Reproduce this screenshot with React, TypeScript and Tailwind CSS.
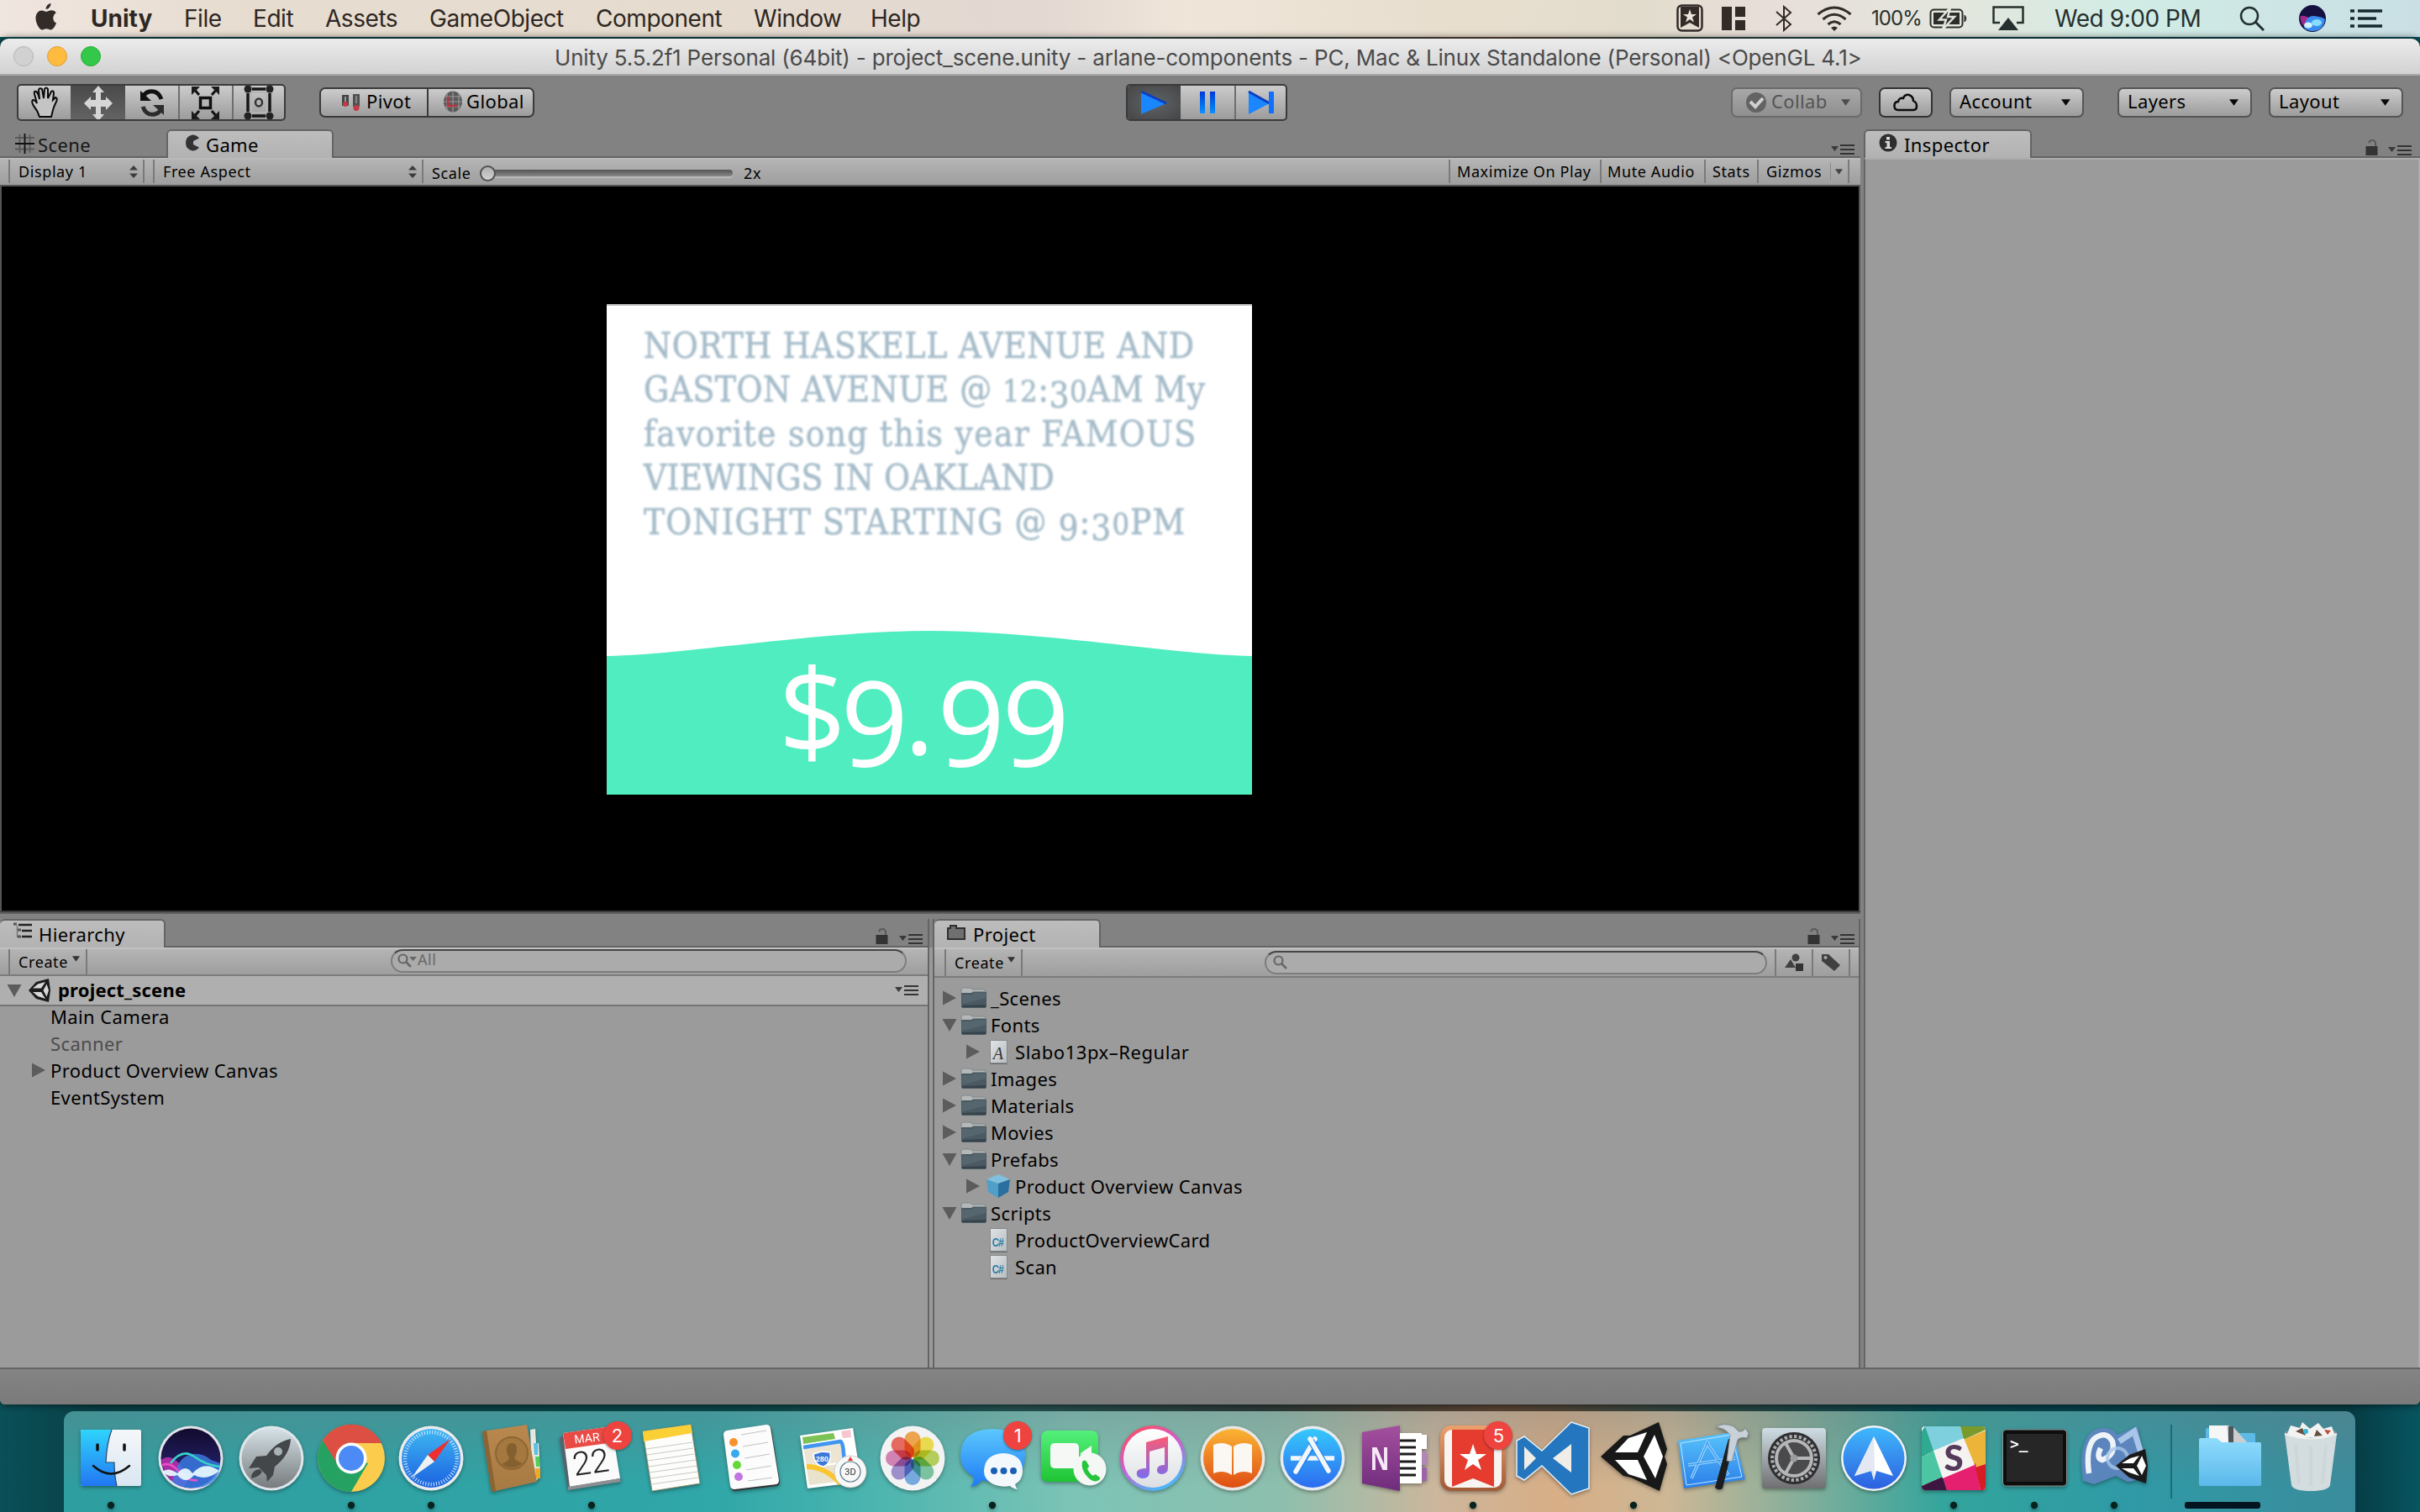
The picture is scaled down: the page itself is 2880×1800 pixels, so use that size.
import type { ReactNode } from "react";

/* ---------- Shared pieces ---------- */

const raised = "bg-gradient-to-b from-[#cccccc] to-[#9c9c9c]";

function Caret({ small = false, color = "#0a0a0a" }: { small?: boolean; color?: string }) {
  return (
    <svg width={small ? 9 : 11} height={small ? 7 : 8} viewBox="0 0 10 7" className="shrink-0">
      <path d="M0 0H10L5 7Z" fill={color} />
    </svg>
  );
}

function PaneMenu() {
  return (
    <svg width="28" height="12" viewBox="0 0 28 12" className="shrink-0">
      <path d="M0 2H9L4.500 8Z" fill="#3a3a3a" />
      <path d="M11 1H28M11 6H28M11 11H28" stroke="#333" strokeWidth="2" />
    </svg>
  );
}

function Lock() {
  return (
    <svg width="16" height="19" viewBox="0 0 16 19" className="shrink-0">
      <path d="M4.500 4.500V3.500Q4.500 1 8 1T12 4V9" fill="none" stroke="#5a5a5a" strokeWidth="2" />
      <rect x="0.500" y="8" width="14" height="11" fill="#333" />
    </svg>
  );
}

function UpDown() {
  return (
    <svg width="10" height="15" viewBox="0 0 10 15" className="shrink-0">
      <path d="M0 5.500L5 0L10 5.500ZM0 9.500H10L5 15Z" fill="#3c3c3c" />
    </svg>
  );
}

function Tab({ className, children }: { className: string; children: ReactNode }) {
  return (
    <div
      className={`flex h-full items-center rounded-t-[6px] border-2 border-b-0 border-[#646464] bg-gradient-to-b from-[#bdbdbd] to-[#b2b2b2] ${className}`}
    >
      {children}
    </div>
  );
}

/* ---------- Mac menu bar ---------- */

const menus = [
  ["File", "w-[82px]"],
  ["Edit", "w-[86px]"],
  ["Assets", "w-[124px]"],
  ["GameObject", "w-[198px]"],
  ["Component", "w-[188px]"],
  ["Window", "w-[139px]"],
  ["Help", "w-[80px]"],
];

function MenuBar() {
  return (
    <div className="flex h-11 shrink-0 items-center bg-[linear-gradient(90deg,#f0e6e0_0,#e6dccf_10%,#e5dbcf_30%,#e3d8d2_43%,#efe5d9_49%,#e8dece_60%,#e2dccd_68%,#e8ded9_73%,#e3e6dd_81%,#d1ece5_88%,#c9dfe5_100%)] pl-[42px] font-['Inter',sans-serif] text-[28px] leading-none tracking-[-0.45px] text-[#2e2722]">
      <svg width="26" height="32" viewBox="0 0 26 32" className="-mt-1">
        <path d="M18.500 0C18.700 3.600 15.800 7 12.600 7C12.300 3.600 15.300 0.400 18.500 0Z" fill="#332b28" />
        <path d="M25 23.500C23.600 27.200 21 31.500 18.200 31.500C16.200 31.500 15.700 30.300 13.300 30.300C10.900 30.300 10.200 31.500 8.400 31.500C4.800 31.500 0.500 23.700 0.500 17.500C0.500 11.800 3.900 8.400 7.600 8.400C10 8.400 11.700 9.900 13.300 9.900C14.800 9.900 16.900 8.200 19.700 8.300C21 8.300 23.400 8.900 24.800 11.200C19.800 14.300 20.500 21.500 25 23.500Z" fill="#332b28" />
      </svg>
      <span className="ml-10 w-[111px] font-bold tracking-normal">Unity</span>
      {menus.map(([name, w]) => (
        <span key={name} className={w}>
          {name}
        </span>
      ))}
      <div className="ml-auto flex items-center text-[#26302e]">
        <svg width="32" height="34" viewBox="0 0 32 34">
          <rect x="1.500" y="1.500" width="29" height="30" rx="5" fill="none" stroke="#332b28" strokeWidth="2.500" />
          <path d="M5 3H27V28L16 22L5 28Z" fill="#332b28" />
          <path d="M16 6L18 12H24L19 15.500L21 21.500L16 18L11 21.500L13 15.500L8 12H14Z" fill="#ece3da" />
        </svg>
        <svg width="28" height="28" viewBox="0 0 28 28" className="ml-[22px]">
          <path d="M0 0H12V28H0ZM16 0H28V12H16ZM16 16H28V28H16Z" fill="#332b28" />
        </svg>
        <svg width="20" height="32" viewBox="0 0 20 32" className="ml-[36px]">
          <path d="M1 8L18 23L10 30V2L18 9L1 24" fill="none" stroke="#332b28" strokeWidth="2" />
        </svg>
        <svg width="42" height="30" viewBox="0 0 42 30" className="ml-[29px]">
          <g fill="none" stroke="#332b28" strokeWidth="3">
            <path d="M1.500 10Q21 -6 40.500 10" />
            <path d="M7.500 16Q21 4.500 34.500 16" />
            <path d="M13.500 22Q21 15.500 28.500 22" />
          </g>
          <path d="M17 26Q21 23 25 26L21 30Z" fill="#332b28" />
        </svg>
        <span className="ml-[23px] w-[69px] text-[24px] tracking-[-0.9px]">100%</span>
        <svg width="46" height="26" viewBox="0 0 46 26">
          <rect x="1.500" y="2.500" width="38" height="21" rx="4" fill="none" stroke="#2c2e2b" strokeWidth="2" />
          <rect x="5" y="6" width="31" height="14" fill="#2c2e2b" />
          <path d="M42 9Q45.500 13 42 17Z" fill="#2c2e2b" stroke="#2c2e2b" />
          <path d="M25 0L12 14.500H20L16 26L30 11H22Z" fill="#2c2e2b" stroke="#e1e6dd" strokeWidth="2.500" />
        </svg>
        <svg width="38" height="30" viewBox="0 0 38 30" className="ml-[29px]">
          <path d="M9 20H1.500V1.500H36.500V20H29" fill="none" stroke="#26302e" strokeWidth="2.500" />
          <path d="M19 14L31 29H7Z" fill="#26302e" />
        </svg>
        <span className="ml-[36px] w-[220px]">Wed 9:00 PM</span>
        <svg width="30" height="30" viewBox="0 0 30 30">
          <circle cx="12" cy="12" r="10" fill="none" stroke="#22302f" strokeWidth="2.500" />
          <path d="M19 19L29 29" stroke="#22302f" strokeWidth="3" />
        </svg>
        <SiriOrb className="ml-[41px] size-8" />
        <svg width="38" height="22" viewBox="0 0 38 22" className="mr-[45px] ml-[29px]">
          <path d="M0 2H5M0 11H5M0 20H5M9 2H38M9 11H31M9 20H38" stroke="#16292d" strokeWidth="3.500" />
        </svg>
      </div>
    </div>
  );
}

function SiriOrb({ className }: { className: string }) {
  return (
    <svg viewBox="0 0 32 32" className={className}>
      <circle cx="16" cy="16" r="16" fill="#151040" />
      <path d="M1 14Q8 10 16 20L12 29Q3 27 1 14Z" fill="#a02a8a" />
      <path d="M6 27Q8 12 18 13T31 17Q29 31 16 31Q10 31 6 27Z" fill="#3b8df0" />
      <ellipse cx="11" cy="24" rx="5" ry="3.500" fill="#cff3ff" />
      <ellipse cx="21" cy="21" rx="6" ry="4" fill="#8fe6ff" opacity="0.900" />
    </svg>
  );
}

/* ---------- Unity window chrome ---------- */

function TitleBar() {
  return (
    <div className="flex h-11 shrink-0 items-center rounded-t-[10px] border-b-2 border-[#a9a9a9] bg-gradient-to-b from-[#ececec] to-[#d2d2d2] pl-4">
      <div className="flex w-[644px] gap-4">
        <i className="size-6 rounded-full border border-[#b5b5b5] bg-[#d1d1d1]" />
        <i className="size-6 rounded-full border border-[#de9f34] bg-[#fdbc40]" />
        <i className="size-6 rounded-full border border-[#27aa35] bg-[#34c84a]" />
      </div>
      <h1 className="pt-1 font-['Inter',sans-serif] text-[26px] leading-none tracking-[-0.18px] whitespace-pre text-[#4a4a4a]">
        Unity 5.5.2f1 Personal (64bit) - project_scene.unity - arlane-components - PC, Mac &amp; Linux Standalone (Personal)
        &lt;OpenGL 4.1&gt;
      </h1>
    </div>
  );
}

function HandIcon() {
  return (
    <svg width="36" height="44" viewBox="0 0 36 44">
      <path
        d="M12 39Q10 32 5 26Q2 21 4 19Q7 19 9 23L6 12Q5 8 8 9Q10 10 11 14L12 18L11 7Q12 4 15 6L17 17L18 6Q20 3 22 6L22 17L26 9Q29 7 29 11L28 19L31 16Q34 17 32 21Q29 27 28 31L26 39Z"
        fill="#c4c4c4"
        stroke="#0a0a0a"
        strokeWidth="2"
      />
    </svg>
  );
}

function ToolButtons() {
  return (
    <div className={`flex h-11 w-[320px] overflow-hidden rounded-[5px] border-2 border-[#3a3a3a] ${raised}`}>
      <div className="flex w-[62px] items-center justify-center">
        <HandIcon />
      </div>
      <div className="flex w-[65px] items-center justify-center bg-gradient-to-b from-[#4a4a4a] to-[#636363]">
        <svg width="36" height="44" viewBox="0 0 36 44">
          <path d="M18 2L25 10H21V19H27V15L35 23L27 31V27H21V36H25L18 44L11 36H15V27H9V31L1 23L9 15V19H15V10H11Z" fill="#d6d6d6" />
        </svg>
      </div>
      <div className="flex w-[65px] items-center justify-center border-r-2 border-[#6e6e6e]">
        <svg width="32" height="38" viewBox="0 0 32 38">
          <path d="M27 15Q23 4 13 6Q8 7 6 11" fill="none" stroke="#111" strokeWidth="5" />
          <path d="M2 5V17H15Z" fill="#111" />
          <path d="M5 24Q9 35 19 33Q24 32 26 28" fill="none" stroke="#2c2c2c" strokeWidth="5" />
          <path d="M30 34V22H17Z" fill="#2c2c2c" />
        </svg>
      </div>
      <div className="flex w-16 items-center justify-center border-r-2 border-[#6e6e6e]">
        <svg width="36" height="40" viewBox="0 0 36 40">
          <rect x="11.500" y="14.500" width="12" height="12" fill="#b5b5b5" stroke="#111" strokeWidth="3.500" />
          <path d="M3 3L10 11M32 3L25 11M3 38L10 30M32 38L25 30" stroke="#111" strokeWidth="3" />
          <path d="M1 1H11L1 11ZM34 1H24L34 11ZM1 40H11L1 30ZM34 40H24L34 30Z" fill="#1a1a1a" />
        </svg>
      </div>
      <div className="flex flex-1 items-center justify-center">
        <svg width="36" height="42" viewBox="0 0 36 42">
          <path d="M5 5H31V37H5Z" fill="none" stroke="#161616" strokeWidth="3.500" />
          <path d="M9 1V41M27 1V41M1 9H35M1 33H35" stroke="#b4b4b4" strokeWidth="2" />
          <circle cx="5" cy="5" r="4.500" fill="#222" />
          <circle cx="31" cy="5" r="4.500" fill="#222" />
          <circle cx="5" cy="37" r="4.500" fill="#222" />
          <circle cx="31" cy="37" r="4.500" fill="#222" />
          <ellipse cx="18" cy="21" rx="4" ry="4.500" fill="none" stroke="#333" strokeWidth="2.500" />
        </svg>
      </div>
    </div>
  );
}

function PivotButtons() {
  return (
    <div className={`ml-10 flex h-9 w-[256px] rounded-[7px] border-2 border-[#3a3a3a] pb-1 ${raised}`}>
      <div className="-mb-1 flex w-[128px] items-center border-r-2 border-[#3a3a3a] pb-1 pl-6">
        <svg width="24" height="24" viewBox="0 0 24 24" className="mt-1">
          <rect x="1" y="3" width="8" height="13" fill="#444" />
          <rect x="4" y="5" width="2" height="6" fill="#999" />
          <rect x="14" y="2" width="8" height="15" fill="#505050" />
          <rect x="17" y="4" width="2" height="9" fill="#888" />
          <circle cx="5" cy="14" r="3" fill="#c43a46" />
          <circle cx="18" cy="18.500" r="3.500" fill="#c43a46" />
        </svg>
        <span className="ml-[6px]">Pivot</span>
      </div>
      <div className="flex items-center pl-4">
        <svg width="26" height="28" viewBox="0 0 26 28" className="mt-0.5">
          <ellipse cx="13" cy="14" rx="11" ry="12.500" fill="#5a5a5a" />
          <path d="M13 2V26M6 4V24M20 4V24M3 8H23M2 14H24M3 20H23" stroke="#999" strokeWidth="1.200" />
          <path d="M7 8V19H18" fill="none" stroke="#b83540" strokeWidth="2.500" />
        </svg>
        <span className="ml-[3px]">Global</span>
      </div>
    </div>
  );
}

function PlayButtons() {
  return (
    <div className={`ml-[704px] flex h-11 w-[192px] overflow-hidden rounded-[5px] border-2 border-[#3a3a3a] ${raised}`}>
      <div className="flex w-[63px] items-center justify-center bg-[radial-gradient(#5f6468,#454545)]">
        <svg width="34" height="34" viewBox="0 0 34 34">
          <path d="M1 4L31 18L1 31Z" fill="#1a86ff" />
          <path d="M1 4L31 18" stroke="#0a3fc0" strokeWidth="3" />
        </svg>
      </div>
      <div className="flex w-[66px] items-center justify-center border-r-2 border-[#6e6e6e]">
        <i className="h-[26px] w-[6px] bg-gradient-to-b from-[#0035d8] to-[#1590ff]" />
        <i className="ml-[6px] h-[26px] w-[6px] bg-gradient-to-b from-[#0035d8] to-[#1590ff]" />
      </div>
      <div className="flex flex-1 items-center justify-center">
        <svg width="34" height="34" viewBox="0 0 34 34">
          <path d="M2 4L27 18L2 31Z" fill="#1a86ff" />
          <path d="M2 4L27 18" stroke="#0a3fc0" strokeWidth="3" />
          <path d="M26 4H32V30H26Z" fill="#1070ff" />
        </svg>
      </div>
    </div>
  );
}

function Dropdown({ label, className }: { label: string; className: string }) {
  return (
    <div className={`flex h-9 w-[160px] items-center justify-between rounded-[7px] border-2 border-[#555] pr-[14px] pb-1 pl-[10px] ${raised} ${className}`}>
      {label}
      <span className="pt-1">
        <Caret />
      </span>
    </div>
  );
}

function Toolbar() {
  return (
    <div className="flex h-16 shrink-0 items-center pl-5">
      <ToolButtons />
      <PivotButtons />
      <PlayButtons />
      <div className="ml-[528px] flex h-9 w-[156px] items-center rounded-[7px] border-2 border-[#6a6a6a] bg-gradient-to-b from-[#a8a8a8] to-[#8f8f8f] pl-[15px] text-[#545454]">
        <svg width="26" height="26" viewBox="0 0 26 26">
          <circle cx="13" cy="13" r="12" fill="#636363" />
          <path d="M6 12L12 18L21 8" fill="none" stroke="#d0d0d0" strokeWidth="4" />
        </svg>
        <span className="ml-[5px] w-[83px] pb-1">Collab</span>
        <Caret color="#4c4c4c" />
      </div>
      <div className={`ml-5 flex h-9 w-16 items-center justify-center rounded-[7px] border-2 border-[#333] ${raised}`}>
        <svg width="30" height="22" viewBox="0 0 30 22">
          <path d="M6 20Q1 20 1.500 14Q2 10 6 10Q7 5 12 6Q14 1 19 2Q24 4 24 9Q28 11 28 15Q28 20 24 20Z" fill="none" stroke="#0c0c0c" strokeWidth="2.500" />
        </svg>
      </div>
      <Dropdown label="Account" className="ml-5" />
      <Dropdown label="Layers" className="ml-10" />
      <Dropdown label="Layout" className="ml-5" />
    </div>
  );
}

/* ---------- Game view ---------- */

function GameBar() {
  return (
    <div className="flex h-8 shrink-0 items-stretch border-t-2 border-[#bababa] bg-gradient-to-b from-[#b4b4b4] to-[#9e9e9e] pb-0.5 text-[18px] leading-none tracking-[0.6px]">
      <div className="ml-[10px] flex w-[162px] items-center justify-between border-x-2 border-[#7a7a7a] pr-[6px] pl-[10px]">
        Display 1 <UpDown />
      </div>
      <div className="ml-[10px] flex w-[322px] items-center justify-between border-x-2 border-[#7a7a7a] pr-[6px] pl-[10px]">
        Free Aspect <UpDown />
      </div>
      <div className="flex items-center pt-[3px] pl-[10px]">
        <span className="w-[57px]">Scale</span>
        <div className="relative h-2 w-[301px] rounded-full bg-gradient-to-b from-[#555] to-[#878787] shadow-[0_2px_0_#b9b9b9]">
          <i className="absolute top-[-5px] left-0 size-[19px] rounded-full border-2 border-[#505050] bg-gradient-to-b from-[#b0b0b0] to-[#d2d2d2]" />
        </div>
        <span className="ml-[13px]">2x</span>
      </div>
      <div className="ml-auto flex items-center border-l-2 border-[#7a7a7a] pl-[8px]">
        <span className="w-[170px]">Maximize On Play</span>
      </div>
      <div className="flex w-[124px] items-center border-l-2 border-[#7a7a7a] pl-[7px] whitespace-nowrap">Mute Audio</div>
      <div className="flex w-[63px] items-center border-l-2 border-[#7a7a7a] pl-[8px]">Stats</div>
      <div className="flex w-[110px] items-center border-x-2 border-[#7a7a7a] pl-[9px]">
        <span className="w-[76px]">Gizmos</span>
        <i className="mr-[5px] h-5 w-px bg-[#888]" />
        <Caret small color="#444" />
      </div>
      <div className="w-[13px]" />
    </div>
  );
}

/* Old-style figures: short ones sit on the baseline, 3 and 9 hang below it. */
function Short({ children }: { children: ReactNode }) {
  return <span className="text-[36px]">{children}</span>;
}

function Hanging({ children }: { children: ReactNode }) {
  return <span className="relative top-[7px]">{children}</span>;
}

function ProductCard() {
  return (
    <div className="relative flex h-[584px] w-[768px] flex-col overflow-hidden border-t-2 border-[#bfbfbf] bg-white">
      <div className="flex h-[387px] flex-col pt-[22px] pl-[44px] font-['DejaVu_Serif_Condensed','DejaVu_Serif',serif] text-[42px] leading-[52.4px] whitespace-nowrap text-[#a5bcc9] blur-[0.8px] [-webkit-text-stroke:0.6px_#a5bcc9]">
        <p className="h-[52.4px] tracking-[0.6px]">NORTH HASKELL AVENUE AND</p>
        <p className="h-[52.4px] tracking-[0.5px]">
          GASTON AVENUE @ <Short>12</Short>:<Hanging>3</Hanging>
          <Short>0</Short>AM My
        </p>
        <p className="h-[52.4px] tracking-[1.3px]">favorite song this year FAMOUS</p>
        <p className="h-[52.4px] tracking-[0.1px]">VIEWINGS IN OAKLAND</p>
        <p className="h-[52.4px] tracking-[1.05px]">
          TONIGHT STARTING @ <Hanging>9</Hanging>:<Hanging>3</Hanging>
          <Short>0</Short>PM
        </p>
      </div>
      <svg width="768" height="30" viewBox="0 0 768 30" className="block shrink-0">
        <path d="M0 30C90 29 250 0 384 0S680 29 768 30Z" fill="#50edc0" />
      </svg>
      <div className="flex flex-1 justify-center bg-[#50edc0] font-['Open_Sans',sans-serif] text-[141px] leading-none text-white">
        <div className="flex pr-4 blur-[0.6px]">
          <span className="-mt-[8px] w-[74px] tracking-[-8px]">$</span>
          <span className="mt-[7px] w-[71px] tracking-[-10px]">9</span>
          <span className="-mt-[8px] w-[44px] pl-1">.</span>
          <span className="mt-[7px] w-[77px] tracking-[-4px]">9</span>
          <span className="mt-[7px] w-[77px] tracking-[-4px]">9</span>
        </div>
      </div>
    </div>
  );
}

function GamePanel() {
  return (
    <section className="flex h-[934px] flex-col">
      <div className="flex h-[34px] shrink-0 items-center border-b-2 border-[#646464] pr-[7px]">
        <div className="flex w-[198px] items-center pt-[3px] pl-[18px] text-[#161616]">
          <svg width="23" height="24" viewBox="0 0 23 24" className="-mt-0.5">
            <path d="M5.500 1V23M17.500 1V23M0 5H23M0 18.500H23" stroke="#5a5a5a" strokeWidth="1.800" />
            <path d="M11.500 0V24M0 12H23" stroke="#111" strokeWidth="1.800" />
          </svg>
          <span className="ml-[4px]">Scene</span>
        </div>
        <div className="-mb-0.5 h-[34px] w-[199px]">
          <Tab className="pl-[20px]">
            <svg width="18" height="20" viewBox="0 0 18 20" className="-mt-1">
              <path d="M17 4.500L10 8V12L17 15.500Q14 19.500 9 19.500Q1 18 1 10T9 0.500Q14 0.500 17 4.500Z" fill="#333" />
            </svg>
            <span className="ml-[7px]">Game</span>
          </Tab>
        </div>
        <div className="ml-auto pt-[16px]">
          <PaneMenu />
        </div>
      </div>
      <GameBar />
      <div className="flex flex-1 justify-center border-2 border-r-2 border-[#555] border-b-[#3a3a3a] bg-black">
        <div className="mt-[140px] mr-[2px]">
          <ProductCard />
        </div>
      </div>
      <div className="h-0.5 bg-[#606060]" />
    </section>
  );
}

/* ---------- Hierarchy ---------- */

function Arrow({ open = false, hidden = false }: { open?: boolean; hidden?: boolean }) {
  return (
    <svg width="18" height="18" viewBox="0 0 18 18" className={hidden ? "invisible shrink-0" : "shrink-0"}>
      <path d={open ? "M0.500 2H17.500L9 17Z" : "M1 0.500V17.500L17 9Z"} fill="#5c5c5c" />
    </svg>
  );
}

function UnityMark({ className }: { className: string }) {
  return (
    <svg viewBox="0 0 28 30" className={className}>
      <path d="M1 15L10 5L25 1L27 15L25 29L10 25Z" fill="#1c1c1c" />
      <path d="M6 12.500L12 7.500L21 5L16 12.500ZM6 17L16 17L21 25L12 22ZM22.500 7.500L25 15L22.500 22.500L18.500 15Z" fill="#d9d9d9" />
    </svg>
  );
}

function SearchField({ className, children }: { className: string; children: ReactNode }) {
  return (
    <div className={`flex h-7 items-center rounded-full border-2 border-[#7d7d7d] border-t-[#454545] bg-[#ababab] ${className}`}>{children}</div>
  );
}

function Magnifier({ caret = false }: { caret?: boolean }) {
  return (
    <svg width="24" height="18" viewBox="0 0 24 18">
      <circle cx="6.500" cy="6.500" r="5" fill="none" stroke="#666" strokeWidth="2.200" />
      <path d="M10 10L16 16" stroke="#666" strokeWidth="2.500" />
      {caret && <path d="M14 4H23L18.500 9Z" fill="#666" />}
    </svg>
  );
}

function HierarchyPanel() {
  return (
    <section className="flex w-[1106px] flex-col border-r-2 border-[#646464]">
      <div className="flex h-[34px] items-center border-b-2 border-[#646464] pr-[6px]">
        <div className="-mb-0.5 h-[34px] w-[197px]">
          <Tab className="border-l-0 pl-4">
            <svg width="24" height="20" viewBox="0 0 24 20" className="-mt-2">
              <path d="M0 2H4M5 9H9M5 17H9" stroke="#555" strokeWidth="3" />
              <path d="M6 3H22M10 10H22M10 17H22" stroke="#222" strokeWidth="2.500" />
              <path d="M4.500 4V18" stroke="#777" strokeWidth="1.500" />
            </svg>
            <span className="ml-[6px]">Hierarchy</span>
          </Tab>
        </div>
        <div className="ml-auto flex items-end gap-[12px] pt-[8px]">
          <Lock />
          <PaneMenu />
        </div>
      </div>
      <div className="flex h-[34px] items-stretch border-t-2 border-b-2 border-t-[#c2c2c2] border-b-[#7c7c7c] bg-gradient-to-b from-[#b4b4b4] to-[#9e9e9e] text-[18px] leading-none tracking-[0.6px]">
        <div className="ml-[10px] flex w-[94px] items-center border-x-2 border-[#7a7a7a] pl-[10px]">
          <span className="w-[64px]">Create</span>
          <span className="-mt-2">
            <Caret small color="#333" />
          </span>
        </div>
        <SearchField className="ml-[361px] w-[614px] pl-1.5">
          <Magnifier caret />
          <span className="pb-1 text-[#686868]">All</span>
        </SearchField>
      </div>
      <div className="flex h-9 items-center border-b-2 border-[#757575] bg-[#afafaf] pr-[11px] pl-[8px]">
        <Arrow open />
        <UnityMark className="ml-[7px] h-[30px] w-[28px]" />
        <span className="ml-[8px] pb-0.5 font-bold tracking-[0.2px]">project_scene</span>
        <span className="ml-auto">
          <PaneMenu />
        </span>
      </div>
      <div className="-mt-1 flex flex-1 flex-col">
        {[
          ["Main Camera", false, false],
          ["Scanner", false, true],
          ["Product Overview Canvas", true, false],
          ["EventSystem", false, false],
        ].map(([name, arrow, dim]) => (
          <div key={String(name)} className="flex h-8 items-center pl-[37px]">
            <Arrow hidden={!arrow} />
            <span className={dim ? "ml-[5px] text-[#4c4c4c]" : "ml-[5px]"}>{name}</span>
          </div>
        ))}
      </div>
    </section>
  );
}

/* ---------- Project ---------- */

function FolderIcon() {
  return (
    <svg width="32" height="26" viewBox="0 0 32 26" className="shrink-0">
      <path d="M1 3Q1 1 3 1H11Q13 1 14 3H28Q30 3 30 5V10H1Z" fill="#b4b8b8" stroke="#7f8688" strokeWidth="1" />
      <path d="M1 8Q1 7 2 7H13L15 5.500H29Q31 5.500 31 7V23Q31 25 29 25H3Q1 25 1 23Z" fill="#4b5a62" />
      <path d="M2 24H30V21L2 22Z" fill="#36434b" />
      <path d="M2 9H14L16 7H30V13L8 19L2 20Z" fill="#5b6b73" opacity="0.700" />
    </svg>
  );
}

function Sheet({ children }: { children: ReactNode }) {
  return (
    <span className="flex h-[28px] w-[21px] shrink-0 items-end justify-center rounded-[1px] border border-[#84888a] bg-gradient-to-br from-[#dfe3e5] to-[#b9bec1] leading-none shadow-[0_1px_0_#6a6a6a]">
      {children}
    </span>
  );
}

function CubeIcon() {
  return (
    <svg width="30" height="28" viewBox="0 0 30 28" className="shrink-0">
      <path d="M15 0L29 6L15 11L1 6Z" fill="#7fc0de" />
      <path d="M1 6L15 11V28L3 21Z" fill="#4f9fc9" />
      <path d="M29 6L15 11V28L27 21Z" fill="#2a6f9f" />
    </svg>
  );
}

type Entry = { name: string; kind: "folder" | "font" | "cube" | "script"; open?: boolean };

const entries: Entry[] = [
  { name: "_Scenes", kind: "folder" },
  { name: "Fonts", kind: "folder", open: true },
  { name: "Slabo13px–Regular", kind: "font" },
  { name: "Images", kind: "folder" },
  { name: "Materials", kind: "folder" },
  { name: "Movies", kind: "folder" },
  { name: "Prefabs", kind: "folder", open: true },
  { name: "Product Overview Canvas", kind: "cube" },
  { name: "Scripts", kind: "folder", open: true },
  { name: "ProductOverviewCard", kind: "script" },
  { name: "Scan", kind: "script" },
];

function ProjectRow({ entry }: { entry: Entry }) {
  if (entry.kind === "folder") {
    return (
      <div className="flex h-8 items-center pl-[9px]">
        <Arrow open={entry.open} />
        <span className="ml-[4px]">
          <FolderIcon />
        </span>
        <span className="ml-[4px]">{entry.name}</span>
      </div>
    );
  }
  return (
    <div className="flex h-8 items-center pl-[37px]">
      <Arrow hidden={entry.kind === "script"} />
      <span className="ml-[5px] flex w-8 justify-center">
        {entry.kind === "cube" && <CubeIcon />}
        {entry.kind === "font" && (
          <Sheet>
            <b className="pb-px font-['Liberation_Serif',serif] text-[20px] font-normal text-[#333] italic">A</b>
          </Sheet>
        )}
        {entry.kind === "script" && (
          <Sheet>
            <b className="inline-block origin-bottom scale-x-90 scale-y-110 pr-px pb-[3px] font-['Liberation_Sans',sans-serif] text-[13px] tracking-[-1px] text-[#2b7fa8]">C#</b>
          </Sheet>
        )}
      </span>
      <span className={entry.kind === "font" ? "ml-[4px] tracking-[0.55px]" : "ml-[4px]"}>{entry.name}</span>
    </div>
  );
}

function ProjectPanel() {
  return (
    <section className="ml-1 flex w-[1104px] flex-col border-x-2 border-[#646464]">
      <div className="flex h-[34px] shrink-0 items-center border-b-2 border-[#646464] pr-[5px]">
        <div className="-mb-0.5 h-[34px] w-[198px]">
          <Tab className="border-l-0 pl-[15px]">
            <svg width="22" height="18" viewBox="0 0 22 18" className="-mt-1">
              <path d="M1 4H4V1H11V4H21V17H1Z" fill="#707070" stroke="#303030" strokeWidth="2" />
            </svg>
            <span className="ml-[9px]">Project</span>
          </Tab>
        </div>
        <div className="ml-auto flex items-end gap-[12px] pt-[8px]">
          <Lock />
          <PaneMenu />
        </div>
      </div>
      <div className="flex h-9 shrink-0 items-stretch border-t-2 border-b-2 border-t-[#c2c2c2] border-b-[#7c7c7c] bg-gradient-to-b from-[#b4b4b4] to-[#9e9e9e] text-[18px] leading-none tracking-[0.6px]">
        <div className="ml-[12px] flex w-[93px] items-center border-x-2 border-[#7a7a7a] pl-[10px]">
          <span className="w-[63px]">Create</span>
          <span className="-mt-2">
            <Caret small color="#333" />
          </span>
        </div>
        <SearchField className="mt-0.5 ml-[288px] w-[598px] pl-2">
          <Magnifier />
        </SearchField>
        <div className="ml-[9px] flex w-[44px] items-center justify-center border-l-2 border-[#7a7a7a]">
          <svg width="24" height="22" viewBox="0 0 24 22">
            <circle cx="14" cy="5" r="4.500" fill="#404040" />
            <path d="M8 7L14 17H1Z" fill="#404040" />
            <rect x="14" y="12" width="9" height="9" fill="#333" />
          </svg>
        </div>
        <div className="flex w-[46px] items-center justify-center border-x-2 border-[#7a7a7a]">
          <svg width="24" height="22" viewBox="0 0 24 22">
            <path d="M1 1H9L23 14L16 21L1 9Z" fill="#404040" />
            <circle cx="5.500" cy="5" r="2" fill="#aaa" />
          </svg>
        </div>
      </div>
      <div className="flex flex-col pt-2">
        {entries.map((e) => (
          <ProjectRow key={e.name} entry={e} />
        ))}
      </div>
    </section>
  );
}

/* ---------- Inspector ---------- */

function InspectorPanel() {
  return (
    <section className="ml-1 flex flex-1 flex-col">
      <div className="flex h-[34px] shrink-0 items-center border-b-2 border-[#646464] pr-[10px]">
        <div className="-mb-0.5 h-[34px] w-[200px]">
          <Tab className="pl-[16px]">
            <svg width="22" height="22" viewBox="0 0 22 22" className="-mt-1">
              <circle cx="11" cy="11" r="10.500" fill="#2e2e2e" />
              <path d="M9 4H13V7.500H9ZM7.500 9H13V16H15V18H7.500V16H9.500V11H7.500Z" fill="#d8d8d8" />
            </svg>
            <span className="ml-[8px]">Inspector</span>
          </Tab>
        </div>
        <div className="ml-auto flex items-end gap-[11px] pt-[10px]">
          <Lock />
          <PaneMenu />
        </div>
      </div>
      <div className="flex-1 border-2 border-b-0 border-[#acacac] border-l-[#666] bg-[#9b9b9b]" />
    </section>
  );
}

/* ---------- Dock ---------- */

function Badge({ children }: { children: ReactNode }) {
  return (
    <span className="absolute top-[12px] right-0 flex size-[34px] items-center justify-center rounded-full bg-[#ee433e] font-['Inter',sans-serif] text-[22px] leading-none text-white shadow-[0_1px_3px_rgba(0,0,0,.4)]">
      {children}
    </span>
  );
}

function DockItem({ children, running = false, badge }: { children: ReactNode; running?: boolean; badge?: string }) {
  return (
    <div className="relative h-[120px] w-[95.360px] shrink-0">
      <svg width="96" height="120" viewBox="0 0 96 120" className="drop-shadow-[0_2px_2px_rgba(0,0,0,.35)]">
        {children}
        {running && <circle cx="48" cy="112" r="4.200" fill="#06231f" />}
      </svg>
      {badge && <Badge>{badge}</Badge>}
    </div>
  );
}

function Gradients() {
  const g: [string, string, string][] = [
    ["g-finder", "#2fd4fd", "#2277f2"],
    ["g-face", "#f5f7f9", "#d9e6f2"],
    ["g-launch", "#d5e1e6", "#777b7d"],
    ["g-safari", "#3fb6f2", "#1b62e0"],
    ["g-book", "#b9884f", "#a67a42"],
    ["g-msg", "#5cc8fd", "#1e7cf5"],
    ["g-ft", "#54f07c", "#1fc433"],
    ["g-ib", "#fbb434", "#df4d14"],
    ["g-as", "#36c8fb", "#2d6cf0"],
    ["g-white", "#ffffff", "#dcdfe2"],
    ["g-note", "#fd5a72", "#7a6cf0"],
    ["g-one", "#a4509e", "#6f2c7c"],
    ["g-wl", "#eea06c", "#a05a36"],
    ["g-xc", "#58c4fb", "#2a7de8"],
    ["g-pref", "#cfdde4", "#6f6f71"],
    ["g-spark", "#3fb8fb", "#2d5fe0"],
    ["g-folder", "#8fdcfd", "#5bb8ea"],
    ["g-siri", "#120b2e", "#2a2a80"],
  ];
  return (
    <svg width="0" height="0" className="absolute">
      <defs>
        {g.map(([id, a, b]) => (
          <linearGradient key={id} id={id} x1="0" y1="0" x2="0" y2="1">
            <stop offset="0" stopColor={a} />
            <stop offset="1" stopColor={b} />
          </linearGradient>
        ))}
        <linearGradient id="g-itunes" x1="0.200" y1="0" x2="0.700" y2="1">
          <stop offset="0" stopColor="#fb4f5b" />
          <stop offset="0.450" stopColor="#d45bd0" />
          <stop offset="1" stopColor="#3fc0fb" />
        </linearGradient>
      </defs>
    </svg>
  );
}

const petals: [string, number][] = [
  ["#f7a13a", 0],
  ["#f3e23c", 45],
  ["#b4d34c", 90],
  ["#6fc59a", 135],
  ["#6aa9e6", 180],
  ["#9a86cf", 225],
  ["#d779b4", 270],
  ["#ef5c50", 315],
];

function Dock() {
  return (
    <div className="relative ml-[76px] flex h-[120px] w-[2727px] overflow-hidden rounded-t-[12px] bg-[linear-gradient(180deg,rgba(110,120,125,.34),rgba(0,0,0,0)_75%),linear-gradient(90deg,#2f9ea0_0%,#2fa6a8_28%,#45b2ae_34%,#7cc4b6_44%,#8dbfae_53%,#cdb69c_60%,#d8ae86_65%,#cdb795_70%,#8fb09a_75%,#33a59c_82%,#2f9aa6_90%,#3a8c9c_100%)] pl-2">
      <Gradients />
      {/* Finder */}
      <DockItem running>
        <rect x="12" y="22" width="72" height="67" rx="2" fill="url(#g-face)" />
        <path d="M14 22H49Q43 38 42 61H52Q52 76 55 89H14Q12 89 12 87V24Q12 22 14 22Z" fill="url(#g-finder)" />
        <path d="M49 22Q43 38 42 61H52Q52 76 55 89" fill="none" stroke="#27476a" strokeWidth="1.200" />
        <path d="M32 40V46M64 40V46" stroke="#111" strokeWidth="3.500" strokeLinecap="round" />
        <path d="M27 65Q48 84 70 65" fill="none" stroke="#111" strokeWidth="2.500" strokeLinecap="round" />
      </DockItem>
      {/* Siri */}
      <DockItem>
        <circle cx="48" cy="56" r="38.500" fill="#e3e3ea" />
        <circle cx="48" cy="56" r="35.500" fill="url(#g-siri)" />
        <path d="M13 58Q22 50 34 62L46 80L40 90Q17 84 13 58Z" fill="#c22fb0" opacity="0.850" />
        <path d="M26 84Q32 56 46 52Q60 48 72 58L83 62Q82 92 48 91.500Q34 91 26 84Z" fill="#3a7fe8" opacity="0.800" />
        <path d="M14 64Q24 60 34 72T56 82" fill="none" stroke="#f04fc4" strokeWidth="2.500" />
        <path d="M24 62Q38 44 52 54T82 66" fill="none" stroke="#35d6c8" strokeWidth="2.500" />
        <path d="M14 72Q22 66 32 74Q42 62 50 74Q64 58 82 71Q66 84 52 76Q42 88 32 76Q22 80 14 72Z" fill="#e9fbff" opacity="0.920" />
      </DockItem>
      {/* Launchpad */}
      <DockItem>
        <circle cx="48" cy="56" r="38.500" fill="#dfe6e9" />
        <circle cx="48" cy="56" r="35.500" fill="url(#g-launch)" />
        <path d="M71 33Q54 36 42 53L30 54L21 68L33 67L42 76L43 84L50 76L52 66Q70 52 71 33Z" fill="#43474a" />
        <circle cx="56" cy="48" r="5" fill="#a9b3b7" />
        <path d="M34 69Q24 70 24 80Q34 78 37 72Z" fill="#43474a" />
      </DockItem>
      {/* Chrome */}
      <DockItem running>
        <circle cx="48" cy="56" r="40" fill="#fccd4d" />
        <path d="M48 56L14 35A40 40 0 0 0 48 96Z" fill="#25a262" />
        <path d="M48 96L68 62L48 56L30 66Z" fill="#25a262" />
        <path d="M14 35A40 40 0 0 1 84 38H48L31 62Z" fill="#dd4f42" />
        <circle cx="48" cy="56" r="18.500" fill="#fff" />
        <circle cx="48" cy="56" r="15" fill="#4c8bf5" />
      </DockItem>
      {/* Safari */}
      <DockItem running>
        <circle cx="48" cy="56" r="38.500" fill="#e9ebee" />
        <circle cx="48" cy="56" r="35" fill="url(#g-safari)" />
        <circle cx="48" cy="56" r="31" fill="none" stroke="#d6ecff" strokeWidth="4.500" strokeDasharray="1 2.200" />
        <path d="M71 33L52 60L44 52Z" fill="#ef2f2f" />
        <path d="M25 79L44 52L52 60Z" fill="#eef0f2" />
      </DockItem>
      {/* Contacts */}
      <DockItem>
        <path d="M70 22L76 21L77 38L80 38L81 54L82 76L78 82L72 84Z" fill="#e7e7e0" />
        <path d="M74 38H79V52H75Z" fill="#57c0ea" />
        <path d="M76 54H81V66H77Z" fill="#4fcf53" />
        <path d="M76 68H82V80H77Z" fill="#f1a823" />
        <path d="M13 24L66 16L78 84L24 96Z" fill="url(#g-book)" />
        <path d="M13 24L18 23L29 95L24 96Z" fill="#8c6433" />
        <circle cx="48" cy="50" r="19" fill="#a5783f" stroke="#8e6632" strokeWidth="2" />
        <path d="M48 38Q55 38 54 47Q53 53 51 55Q52 59 61 62Q48 72 36 63Q45 59 45 55Q42 52 42 46Q42 38 48 38Z" fill="#85602f" />
      </DockItem>
      {/* Calendar */}
      <DockItem running badge="2">
        <path d="M10 32L18 26L84 82L82 84L20 94Z" fill="#59616a" />
        <path d="M14 26L72 18L82 80L22 90Z" fill="#fbfbfb" />
        <path d="M14 26L72 18L75 37L17 45Z" fill="#ea4a45" />
        <path d="M20 90L82 80L83 84L20 94Z" fill="#8b8f93" />
        <text x="43" y="37" fontFamily="Roboto, sans-serif" fontSize="14" fill="#fff" textAnchor="middle" transform="rotate(-6 43 37)">
          MAR
        </text>
        <text x="49" y="74" fontFamily="Roboto, sans-serif" fontWeight="300" fontSize="39" fill="#222" textAnchor="middle" transform="rotate(-8 49 74)">
          22
        </text>
      </DockItem>
      {/* Notes */}
      <DockItem>
        <path d="M13 24L70 16L81 86L24 95Z" fill="#fdfdfb" stroke="#9b8b5a" strokeWidth="0.800" />
        <path d="M13 24L70 16L72 26L14 36Z" fill="#fbcf36" />
        <path d="M17 45L72 37M18 52L73 44M19 59L74 51M20 66L76 58M21 73L77 65M22 80L78 72M23 87L79 79" stroke="#c9c9c5" strokeWidth="1.200" />
      </DockItem>
      {/* Reminders */}
      <DockItem>
        <path d="M19 24L66 18Q70 17 71 21L81 84Q81 88 78 89L28 95Q24 95 23 91L15 29Q15 25 19 24Z" fill="#31363a" />
        <path d="M18 23L65 16Q69 16 70 20L80 82Q80 86 77 87L27 93Q23 93 22 89L14 28Q14 24 18 23Z" fill="#fcfcfc" />
        <circle cx="26" cy="37" r="5" fill="#f8922c" />
        <circle cx="28" cy="50.500" r="5" fill="#36a9ef" />
        <circle cx="30" cy="64" r="5" fill="#63d838" />
        <circle cx="32" cy="78" r="5" fill="#c375e2" />
        <path d="M35 28L65 23M37 42L67 37M39 56L69 51M41 70L71 65M43 83L72 79" stroke="#c3c3c3" strokeWidth="1.200" />
      </DockItem>
      {/* Maps */}
      <DockItem>
        <path d="M10 29L73 20L83 84L19 92Z" fill="#fff" />
        <path d="M13 31L50 26L52 33L14 39Z" fill="#7dc255" />
        <path d="M59 24L70 22L71 31L61 32Z" fill="#f5c6cf" />
        <path d="M14 42L60 35L63 60L18 66Z" fill="#ece5d3" />
        <path d="M18 68L64 62L68 82L21 88Z" fill="#e9e2cd" />
        <path d="M14 43L58 36Q61 36 62 50L63 60" fill="none" stroke="#3f95f0" strokeWidth="4.500" />
        <path d="M18 66Q40 66 58 86" fill="none" stroke="#fbc52f" strokeWidth="6" />
        <path d="M26 51L36 48L46 49Q48 62 38 66Q27 64 26 51Z" fill="#3b78d8" stroke="#fff" strokeWidth="1.500" />
        <text x="36.500" y="60" fontFamily="Liberation Sans" fontSize="9" fontWeight="700" fill="#fff" textAnchor="middle">
          280
        </text>
        <circle cx="70" cy="72" r="19" fill="#f8f8f8" stroke="#c4c4c4" strokeWidth="0.800" />
        <circle cx="70" cy="72" r="12" fill="none" stroke="#56788c" strokeWidth="1.200" />
        <path d="M70 54L73 59H67Z" fill="#e83a30" />
        <text x="70" y="76" fontFamily="Roboto, sans-serif" fontSize="11" fill="#333" textAnchor="middle">
          3D
        </text>
      </DockItem>
      {/* Photos */}
      <DockItem>
        <circle cx="48" cy="56" r="38.500" fill="#f3f3f3" />
        {petals.map(([c, a]) => (
          <rect key={a} x="38.500" y="24" width="19" height="31" rx="9.500" fill={c} opacity="0.880" transform={`rotate(${a} 48 56)`} className="mix-blend-multiply" />
        ))}
      </DockItem>
      {/* Messages */}
      <DockItem running badge="1">
        <path d="M48 21Q87 22 87 53Q87 84 50 84Q42 84 36 82Q30 89 22 90Q27 84 26 78Q10 69 10 53Q10 22 48 21Z" fill="url(#g-msg)" />
        <path d="M61 50Q84 51 84 71Q84 82 75 87Q76 91 78 93Q72 92 69 89Q61 91 52 88Q38 83 38 71Q39 51 61 50Z" fill="#f3f8fd" />
        <circle cx="50" cy="71" r="4" fill="#1b5fb2" />
        <circle cx="61.500" cy="71" r="4" fill="#1b5fb2" />
        <circle cx="73" cy="71" r="4" fill="#1b5fb2" />
      </DockItem>
      {/* FaceTime */}
      <DockItem>
        <rect x="11" y="23" width="68" height="61" rx="8" fill="url(#g-ft)" />
        <rect x="22" y="38" width="34" height="30" rx="5" fill="#f6f8f6" />
        <path d="M58 50L71 41V62L58 56Z" fill="#f6f8f6" />
        <circle cx="69" cy="69" r="19.500" fill="#f4f7f4" />
        <path d="M60 60Q63 57 65 60L68 65Q68 67 66 68Q68 74 73 77Q75 74 77 76L81 79Q82 81 78 83Q72 85 66 78Q58 69 60 60Z" fill="#25c53c" />
      </DockItem>
      {/* iTunes */}
      <DockItem>
        <circle cx="48" cy="56" r="39" fill="url(#g-itunes)" />
        <circle cx="48" cy="56" r="35" fill="url(#g-white)" />
        <path d="M40 37L66 30V67Q66 75 58 75Q52 74 53 69Q54 64 62 64V43L44 48V72Q44 80 36 80Q27 79 29 72Q31 68 40 68Z" fill="url(#g-note)" />
      </DockItem>
      {/* iBooks */}
      <DockItem>
        <circle cx="48" cy="56" r="38.500" fill="#e9e6e3" />
        <circle cx="48" cy="56" r="35" fill="url(#g-ib)" />
        <path d="M25 40Q37 35 47 42V76Q37 69 25 74ZM71 40Q59 35 49 42V76Q59 69 71 74Z" fill="#fbf8f4" />
      </DockItem>
      {/* App Store */}
      <DockItem>
        <circle cx="48" cy="56" r="38.500" fill="#e6ebf0" />
        <circle cx="48" cy="56" r="35" fill="url(#g-as)" />
        <path d="M22 56H74" stroke="#f2f7fb" strokeWidth="5.500" />
        <path d="M51 35L30 70" stroke="#2a86ee" strokeWidth="8" />
        <path d="M51 33L28 72" stroke="#f2f7fb" strokeWidth="5.500" strokeLinecap="round" />
        <path d="M46 35L66 69" stroke="#2a86ee" strokeWidth="8" />
        <path d="M45 33L67 71" stroke="#f2f7fb" strokeWidth="5.500" strokeLinecap="round" />
      </DockItem>
      {/* OneNote */}
      <DockItem>
        <rect x="74" y="48" width="14" height="16" fill="#b285bb" />
        <rect x="74" y="67" width="14" height="16" fill="#9d63aa" />
        <path d="M52 26H82V28H88V45H82V86H52Z" fill="#fff" />
        <path d="M56 35H75M56 43H75M56 51H75M56 60H75M56 68H75M56 76H75" stroke="#1c1c1c" strokeWidth="2.800" />
        <path d="M11 25L56 17V95L11 86Z" fill="url(#g-one)" />
        <text x="32" y="70" fontFamily="Open Sans, sans-serif" fontSize="38" fontWeight="700" fill="#f7e9f8" textAnchor="middle" textLength="23" lengthAdjust="spacingAndGlyphs">
          N
        </text>
      </DockItem>
      {/* Wunderlist */}
      <DockItem running badge="5">
        <rect x="9" y="17" width="78" height="78" rx="13" fill="url(#g-wl)" />
        <rect x="14" y="22" width="68" height="69" rx="9" fill="#f7f4f1" />
        <path d="M23 22H73V90L48 80L23 90Z" fill="#e63c2f" />
        <path d="M48 39L52 51H64L54 58L58 70L48 63L38 70L42 58L32 51H44Z" fill="#fff" />
      </DockItem>
      {/* Visual Studio Code */}
      <DockItem>
        <path d="M70 13L91 20V92L70 99L35 65L14 82L5 77V35L14 30L35 47Z" fill="#2477be" stroke="#e8f2fa" strokeWidth="1.500" />
        <path d="M70 39L48 56L70 73ZM14 42V70L28 56Z" fill="#f0ece8" />
      </DockItem>
      {/* Unity */}
      <DockItem running>
        <path d="M9 54L36 29H44L78 13L88 45L85 54L88 63L79 95L45 79L36 77Z" fill="#181818" />
        <path d="M26 49L42 32L64 25L53 49ZM26 58L53 58L64 82L42 75ZM73 28L83 54L74 80L60 54Z" fill="#fff" />
      </DockItem>
      {/* Xcode */}
      <DockItem>
        <path d="M6 35L72 25L86 81L13 92Z" fill="url(#g-xc)" />
        <path d="M9 38L70 28L82 78L16 88Z" fill="none" stroke="#bfe6ff" strokeWidth="1" />
        <path d="M42 35L22 80M40 37L66 76M18 64L74 56" fill="none" stroke="#a5d8ff" strokeWidth="3.500" />
        <path d="M42 35L22 80M40 37L66 76M18 64L74 56" fill="none" stroke="#3f9df0" strokeWidth="1.500" />
        <path d="M66 33L73 34L59 92Q54 95 50 91Z" fill="#1b1d20" />
        <path d="M51 19Q60 13 72 18L78 24Q84 25 86 20L90 26L88 32Q80 30 77 34L70 60L64 59L68 28Q62 20 51 19Z" fill="#c8d0d8" stroke="#7d868e" strokeWidth="0.800" />
      </DockItem>
      {/* System Preferences */}
      <DockItem>
        <rect x="10" y="20" width="76" height="72" rx="4" fill="url(#g-pref)" />
        <circle cx="48" cy="56" r="31" fill="#2f2f31" />
        <circle cx="48" cy="56" r="26" fill="none" stroke="#a9abac" strokeWidth="4" strokeDasharray="3.400 2.400" />
        <circle cx="48" cy="56" r="21" fill="#4a4a4c" stroke="#b5b6b7" strokeWidth="4" />
        <path d="M48 56L38 38M48 56L38 74M48 56H69" stroke="#b5b6b7" strokeWidth="4" />
        <circle cx="48" cy="56" r="4.500" fill="#9a9b9c" />
      </DockItem>
      {/* Spark */}
      <DockItem>
        <circle cx="48" cy="56" r="39" fill="#f1f4f7" />
        <circle cx="48" cy="56" r="36.500" fill="url(#g-spark)" />
        <path d="M48 30L71 77L51 71L48 82L45 71L25 77Z" fill="#fff" />
        <path d="M48 30L49 70L48 82L45 71L25 77Z" fill="#e3e8f3" />
      </DockItem>
      {/* Slack */}
      <DockItem running>
        <rect x="10" y="18" width="76" height="76" rx="4" fill="#f4f3f1" />
        <path d="M14 18H56L60 34L19 51Z" fill="#7fd0de" />
        <path d="M56 18H82Q86 18 86 22L60 34Z" fill="#7a9a2c" />
        <path d="M86 23V64L72 69L60 34Z" fill="#edb43a" />
        <path d="M10 24L14 18L24 47L10 55Z" fill="#2fa98f" />
        <path d="M10 55L25 47L35 78L10 89Z" fill="#4cc5a2" />
        <path d="M35 78L74 62L80 94H40Z" fill="#e5206e" />
        <path d="M74 67L86 63V90Q86 94 82 94H80Z" fill="#d61d26" />
        <path d="M10 89L35 78L40 94H14Q10 94 10 90Z" fill="#3e1540" />
        <path d="M24 47L60 32L73 64L35 80Z" fill="#f4f3f1" />
        <text x="48" y="71" fontFamily="Lato, sans-serif" fontSize="42" fontWeight="900" fill="#553a5c" textAnchor="middle">
          S
        </text>
      </DockItem>
      {/* Terminal */}
      <DockItem running>
        <rect x="10.500" y="22" width="76" height="67" rx="4" fill="#0d0d0d" stroke="#8b9394" strokeWidth="1" />
        <rect x="15" y="27" width="67" height="57" fill="#262626" />
        <text x="19" y="45" fontFamily="DejaVu Sans Mono" fontSize="18" fontWeight="700" fill="#fff">
          &gt;_
        </text>
      </DockItem>
      {/* MonoDevelop */}
      <DockItem running>
        <path d="M11 83Q4 40 22 24Q40 14 52 28L76 18L85 65Q80 84 64 84L50 77L24 87Z" fill="#5f88c2" opacity="0.920" />
        <path d="M18 74Q14 44 24 33Q38 22 46 36Q50 52 34 58Q26 56 32 44" fill="none" stroke="#eef3f8" strokeWidth="6.500" />
        <path d="M54 36L72 24L80 50" fill="none" stroke="#a9c6e8" strokeWidth="7" />
        <circle cx="52" cy="56" r="12" fill="none" stroke="#a9c6e8" strokeWidth="4" opacity="0.800" />
        <path d="M50 65L66 52L85 45L88 65L86 86L66 79Z" fill="#191919" />
        <path d="M57 62L67 56L78 53L71 62ZM57 68H71L78 77L66 73ZM81 53L86 65L81 76L75 65Z" fill="#fff" />
      </DockItem>
      <i className="ml-[20px] mt-4 h-[88px] w-0.5 bg-[#1f6a78]" />
      {/* Documents stack */}
      <div className="relative ml-[21px] h-[120px] w-[96px] shrink-0">
        <svg width="96" height="120" viewBox="0 0 96 120">
          <path d="M19 22Q19 20 21 20H32V26H76Q78 26 78 28V45H19Z" fill="#5db9e6" />
          <path d="M23 17H46L68 37V50H23Z" fill="#f6f6f6" />
          <path d="M44 17L52 19L68 37H46Z" fill="#cdcdcd" />
          <path d="M46 18H52V37H46Z" fill="#4d565a" />
          <path d="M11 34Q11 32 13 32H32L38 37H83Q85 37 85 39V87Q85 89 83 89H13Q11 89 11 87Z" fill="url(#g-folder)" />
        </svg>
        <i className="absolute bottom-[4px] left-[-6px] h-2 w-[90px] rounded-[3px] bg-[#02141f]" />
      </div>
      {/* Trash */}
      <svg width="96" height="120" viewBox="0 0 96 120" className="shrink-0">
        <path d="M17 27L25 88Q27 95 48 95T71 88L79 27Z" fill="#dfe2e3" opacity="0.930" />
        <path d="M30 40L34 86M48 42V88M66 40L62 86" stroke="#cdd1d2" strokeWidth="4" opacity="0.500" />
        <ellipse cx="48" cy="26" rx="31" ry="6" fill="#8d9597" />
        <path d="M20 27L24 17L35 20L38 13L47 21L57 14L63 21L73 18L76 27Q60 33 48 31Q30 33 20 27Z" fill="#f3f3f3" />
        <path d="M30 24L38 20L42 29ZM55 22L62 29L52 30Z" fill="#65503f" />
        <circle cx="42" cy="24" r="3" fill="#35b6d6" />
        <path d="M64 22L72 23L68 28Z" fill="#c04a3a" />
        <path d="M17 27Q48 38 79 27" fill="none" stroke="#eef0f0" strokeWidth="2" />
      </svg>
    </div>
  );
}

/* ---------- Page ---------- */

export default function App() {
  return (
    <div className="flex h-[1800px] w-[2880px] flex-col overflow-hidden bg-[linear-gradient(90deg,#0a5058_0%,#083f45_4%,#0a4548_30%,#24504f_42%,#2c3a38_52%,#5a4334_62%,#2e4540_70%,#07424a_80%,#063a42_97%,#075560_100%)]">
      <MenuBar />
      <div className="mt-0.5 flex h-[1626px] shrink-0 flex-col overflow-hidden rounded-t-[10px] rounded-b-[6px] bg-[#828282] font-['Noto_Sans',sans-serif] text-[22px] leading-none tracking-[0.38px] text-black shadow-[0_0_10px_rgba(0,0,0,.7)]">
        <TitleBar />
        <Toolbar />
        <div className="flex h-[1476px] shrink-0 border-b-2 border-[#646464]">
          <div className="flex w-[2214px] flex-col">
            <GamePanel />
            <div className="flex h-[540px] pt-[6px]">
              <div className="flex bg-[linear-gradient(#828282_34px,#9b9b9b_34px)]">
                <HierarchyPanel />
              </div>
              <div className="flex bg-[linear-gradient(#828282_34px,#9b9b9b_34px)]">
                <ProjectPanel />
              </div>
            </div>
          </div>
          <InspectorPanel />
        </div>
        <div className="flex-1 bg-gradient-to-b from-[#848484] to-[#7a7a7a]" />
      </div>
      <div className="mt-2 flex">
        <Dock />
      </div>
    </div>
  );
}
